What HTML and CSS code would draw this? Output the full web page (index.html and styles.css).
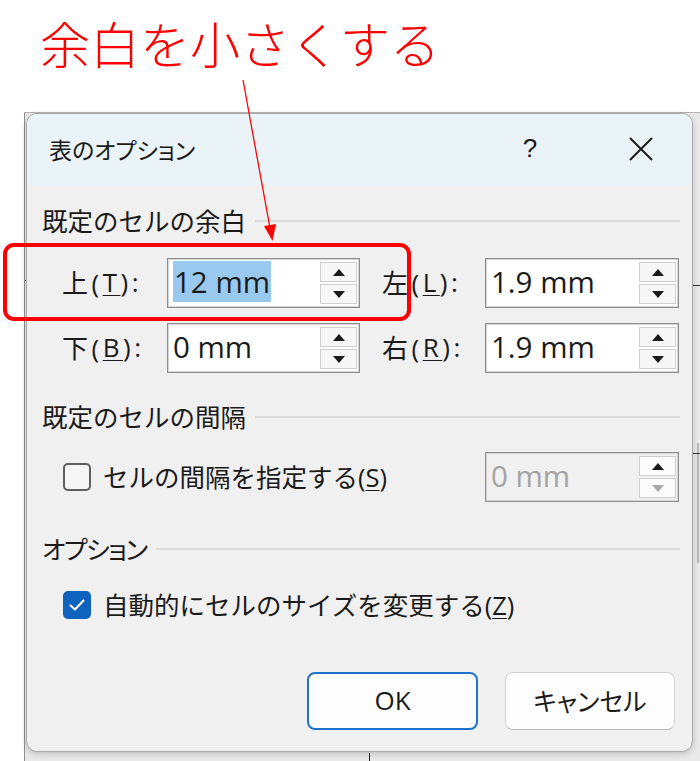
FILE: index.html
```html
<!DOCTYPE html>
<html lang="ja">
<head>
<meta charset="utf-8">
<title>表のオプション</title>
<link rel="stylesheet" href="styles.css">
</head>
<body>
<div class="page">
  <div class="caption">余白を小さくする</div>
  <div class="screen">
    <i class="bg-line bl-right"></i>
    <i class="bg-tick bt-r1"></i>
    <i class="bg-tick bt-r2"></i>
    <i class="bg-tick bt-l1"></i>
    <i class="bg-vline bv-bottom"></i>
    <div class="dialog">
      <div class="titlebar">
        <span class="title">表のオプション</span>
        <span class="help">?</span>
        <span class="close">
          <svg width="26" height="26" viewBox="0 0 26 26"><path d="M2 2 L24 24 M24 2 L2 24" stroke="#1a1a1a" stroke-width="2" fill="none"/></svg>
        </span>
      </div>
      <div class="body">
        <div class="section s1"><span class="stext">既定のセルの余白</span><i class="rule"></i></div>
        <div class="grid margins">
          <span class="lbl">上(<u>T</u>):</span>
          <div class="spin"><span class="val"><span class="sel">12 mm</span></span><span class="btns"><b class="btn"><i class="up"></i></b><b class="btn"><i class="dn"></i></b></span></div>
          <span class="lbl lbl2">左(<u>L</u>):</span>
          <div class="spin"><span class="val">1.9 mm</span><span class="btns"><b class="btn"><i class="up"></i></b><b class="btn"><i class="dn"></i></b></span></div>
          <span class="lbl">下(<u>B</u>):</span>
          <div class="spin"><span class="val">0 mm</span><span class="btns"><b class="btn"><i class="up"></i></b><b class="btn"><i class="dn"></i></b></span></div>
          <span class="lbl lbl2">右(<u>R</u>):</span>
          <div class="spin"><span class="val">1.9 mm</span><span class="btns"><b class="btn"><i class="up"></i></b><b class="btn"><i class="dn"></i></b></span></div>
        </div>
        <div class="section s2"><span class="stext">既定のセルの間隔</span><i class="rule"></i></div>
        <div class="grid spacing">
          <label class="check"><span class="box"></span><span class="ctext">セルの間隔を指定する(<u>S</u>)</span></label>
          <div class="spin disabled"><span class="val">0 mm</span><span class="btns"><b class="btn"><i class="up"></i></b><b class="btn"><i class="dn"></i></b></span></div>
        </div>
        <div class="section s3"><span class="stext">オプション</span><i class="rule"></i></div>
        <label class="check auto"><span class="box on"><svg width="18" height="14" viewBox="0 0 18 14"><path d="M2.5 7.5 L7 11.5 L15.5 2.5" stroke="#ffffff" stroke-width="2" fill="none" stroke-linecap="round" stroke-linejoin="round"/></svg></span><span class="ctext">自動的にセルのサイズを変更する(<u>Z</u>)</span></label>
        <div class="buttons">
          <span class="pbtn ok">OK</span>
          <span class="pbtn">キャンセル</span>
        </div>
      </div>
    </div>
  </div>
  <svg class="arrow" width="700" height="261" viewBox="0 0 700 261">
    <line x1="243" y1="80" x2="270" y2="228" stroke="#ff0000" stroke-width="1.3"/>
    <polygon points="272.5,241 264,226 276,224" fill="#ff0000"/>
  </svg>
  <div class="redbox"></div>
</div>
</body>
</html>
```

FILE: styles.css
```css
html, body {
  margin: 0;
  padding: 0;
  background: #ffffff;
}
.page {
  position: relative;
  width: 700px;
  height: 761px;
  overflow: hidden;
  font-family: "Open Sans", "Noto Sans CJK JP", sans-serif;
  color: #1a1a1a;
}
.caption {
  height: 112px;
  box-sizing: border-box;
  padding: 10px 0 0 40px;
  font-family: "Noto Sans CJK JP", sans-serif;
  font-size: 50px;
  line-height: 64px;
  font-weight: 300;
  color: #ff0000;
}
.screen {
  position: relative;
  margin-left: 24px;
  height: 649px;
  background: #e9e9e9;
  border-left: 1px solid #8f8f8f;
  border-top: 1px solid #b4b4b4;
  box-sizing: border-box;
}
.bg-line, .bg-tick, .bg-vline {
  position: absolute;
  display: block;
}
.bl-right {
  left: 672px;
  top: 330px;
  width: 2px;
  height: 120px;
  background: #b8b8b8;
}
.bt-r1 { left: 668px; top: 172px; width: 8px; height: 1px; background: #333; }
.bt-r2 { left: 668px; top: 340px; width: 8px; height: 1px; background: #333; }
.bt-l1 { left: 0; top: 167px; width: 3px; height: 1px; background: #333; }
.bv-bottom { left: 344px; top: 640px; width: 1px; height: 10px; background: #222; }

.dialog {
  position: relative;
  margin-left: 1px;
  width: 667px;
  box-sizing: border-box;
  background: #f0f0f0;
  border: 1px solid #a9a9a9;
  border-radius: 11px;
  overflow: hidden;
  box-shadow: 0 2px 6px rgba(0, 0, 0, 0.18);
}
.titlebar {
  height: 71px;
  background: #eaf4f8;
  display: flex;
  align-items: center;
  padding-left: 22px;
}
.title {
  font-family: "Noto Sans CJK JP", sans-serif;
  font-size: 23px;
  font-feature-settings: "palt";
  flex: 1;
  padding-bottom: 2px;
}
.help {
  font-family: "Liberation Sans", sans-serif;
  font-size: 26px;
  width: 40px;
  text-align: center;
  margin-right: 78px;
  padding-bottom: 2px;
}
.close {
  width: 26px;
  height: 26px;
  margin-right: 38px;
  margin-bottom: 2px;
}
.close svg { display: block; }

.body {
  padding: 0 12px 21px 15px;
}
.section {
  display: flex;
  align-items: center;
  height: 36px;
  font-family: "Noto Sans CJK JP", sans-serif;
  font-size: 25.5px;
  color: #1a1a1a;
}
.stext { white-space: nowrap; }
.s3 .stext {
  font-feature-settings: "palt";
  letter-spacing: -1.5px;
}
.rule {
  flex: 1;
  height: 2px;
  background: #dcdcdc;
  margin-left: 9px;
  margin-top: 3px;
}
.s1 { margin-top: 16px; }
.s2 { margin-top: 24px; }
.s3 { margin-top: 27px; }

.grid {
  display: grid;
  grid-template-columns: 105px 193px 125px 194px;
  margin-left: 20px;
}
.margins {
  margin-top: 21px;
  row-gap: 15px;
}
.spacing {
  margin-top: 19px;
}
.lbl {
  display: flex;
  align-items: center;
  font-size: 26px;
  letter-spacing: 3.5px;
  white-space: nowrap;
  padding-bottom: 2px;
}
.lbl2 { padding-left: 22px; }
u { text-decoration-thickness: 1px; text-underline-offset: 3px; }

.spin {
  height: 50px;
  box-sizing: border-box;
  border: 1px solid #8d8d8d;
  box-shadow: inset 0 0 0 1px #d5d5d5;
  background: #ffffff;
  display: flex;
  align-items: center;
}
.val {
  flex: 1;
  padding-left: 5px;
  font-size: 29.5px;
  line-height: 34px;
  white-space: nowrap;
  color: #1a1a1a;
  padding-bottom: 2px;
}
.sel {
  background: #99c9ef;
  padding: 0 1px;
}
.btns {
  width: 37px;
  margin-right: 2px;
  display: flex;
  flex-direction: column;
  gap: 2px;
}
.btn {
  height: 20px;
  box-sizing: border-box;
  border: 1px solid #cfcfcf;
  background: #f7f7f7;
  display: flex;
  align-items: center;
  justify-content: center;
}
.up, .dn {
  width: 0;
  height: 0;
  border-left: 6px solid transparent;
  border-right: 6px solid transparent;
}
.up { border-bottom: 7px solid #1a1a1a; }
.dn { border-top: 7px solid #1a1a1a; }
.disabled { background: #f0f0f0; }
.disabled .val { color: #a3a3a3; }
.disabled .btn { background: #fbfbfb; }
.disabled .dn { border-top-color: #a8a8a8; }

.check {
  display: flex;
  align-items: center;
  grid-column: 1 / 4;
}
.box {
  width: 28px;
  height: 28px;
  box-sizing: border-box;
  border: 2px solid #5f5f5f;
  border-radius: 5px;
  background: #f6f6f6;
  margin-left: 1px;
  margin-right: 12px;
  display: flex;
  align-items: center;
  justify-content: center;
}
.box.on {
  background: #0f62be;
  border-color: #0f62be;
}
.box svg { display: block; }
.ctext {
  font-size: 25.5px;
  white-space: nowrap;
  padding-bottom: 3px;
}
.auto {
  margin-left: 20px;
  margin-top: 22px;
  height: 36px;
}
.buttons {
  display: flex;
  justify-content: flex-end;
  gap: 27px;
  margin-top: 49px;
  margin-right: 5px;
}
.pbtn {
  width: 170px;
  height: 58px;
  box-sizing: border-box;
  border: 1px solid #d3d3d3;
  border-bottom-color: #bcbcbc;
  border-radius: 8px;
  background: #fdfdfd;
  display: flex;
  align-items: center;
  justify-content: center;
  font-family: "Noto Sans CJK JP", sans-serif;
  font-size: 25px;
  font-feature-settings: "palt";
  padding-bottom: 2px;
}
.pbtn.ok {
  width: 171px;
  border: 2px solid #1d73cc;
  font-family: "Open Sans", sans-serif;
  font-size: 26px;
}

.arrow {
  position: absolute;
  left: 0;
  top: 0;
}
.redbox {
  position: absolute;
  left: 3px;
  top: 243px;
  width: 408px;
  height: 78px;
  box-sizing: border-box;
  border: 4px solid #ff0000;
  border-radius: 11px;
}
```
